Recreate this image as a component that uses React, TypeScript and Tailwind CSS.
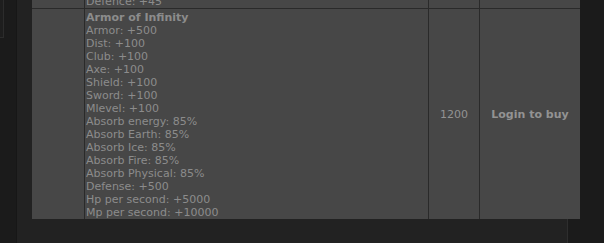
export default function App() {
  const stats = [
    "Armor: +500",
    "Dist: +100",
    "Club: +100",
    "Axe: +100",
    "Shield: +100",
    "Sword: +100",
    "Mlevel: +100",
    "Absorb energy: 85%",
    "Absorb Earth: 85%",
    "Absorb Ice: 85%",
    "Absorb Fire: 85%",
    "Absorb Physical: 85%",
    "Defense: +500",
    "Hp per second: +5000",
    "Mp per second: +10000",
  ];

  return (
    <div className="flex h-[243px] w-[604px] overflow-hidden bg-[#1b1b1b] font-['DejaVu_Sans',Verdana,sans-serif] text-[11px] leading-[13px] text-[#8c8c8c]">
      {/* left gutter */}
      <div className="w-[16px] shrink-0">
        <div className="h-[38px] w-[4px] border-r border-b border-[#2c2c2c] bg-[#1e1e1e]" />
      </div>

      {/* content panel */}
      <div className="h-full w-[552px] shrink-0 border-l border-r border-l-[#171717] border-r-[#2e2e2e] bg-[#222222] pl-[15px]">
        <div className="-mt-[5px] w-[548px] bg-[#474747]">
          {/* previous row, cut off */}
          <div className="flex border-b border-[#2a2a2a]">
            <div className="w-[53px] shrink-0 border-r border-[#2a2a2a]" />
            <div className="w-[344px] shrink-0 border-r border-[#2a2a2a] pl-[1px]">Defence: +45</div>
            <div className="w-[51px] shrink-0 border-r border-[#2a2a2a]" />
            <div className="w-[100px] shrink-0" />
          </div>

          {/* item row */}
          <div className="flex">
            <div className="w-[53px] shrink-0 border-r border-[#2a2a2a]" />
            <div className="w-[344px] shrink-0 border-r border-[#2a2a2a] pt-[2px] pl-[1px]">
              <div className="font-bold">Armor of Infinity</div>
              {stats.map((s) => (
                <div key={s}>{s}</div>
              ))}
            </div>
            <div className="flex w-[51px] shrink-0 items-center justify-center border-r border-[#2a2a2a] text-[#939393]">
              1200
            </div>
            <div className="flex w-[100px] shrink-0 items-center justify-center font-bold text-[#939393]">
              Login to buy
            </div>
          </div>
        </div>
      </div>
    </div>
  );
}
